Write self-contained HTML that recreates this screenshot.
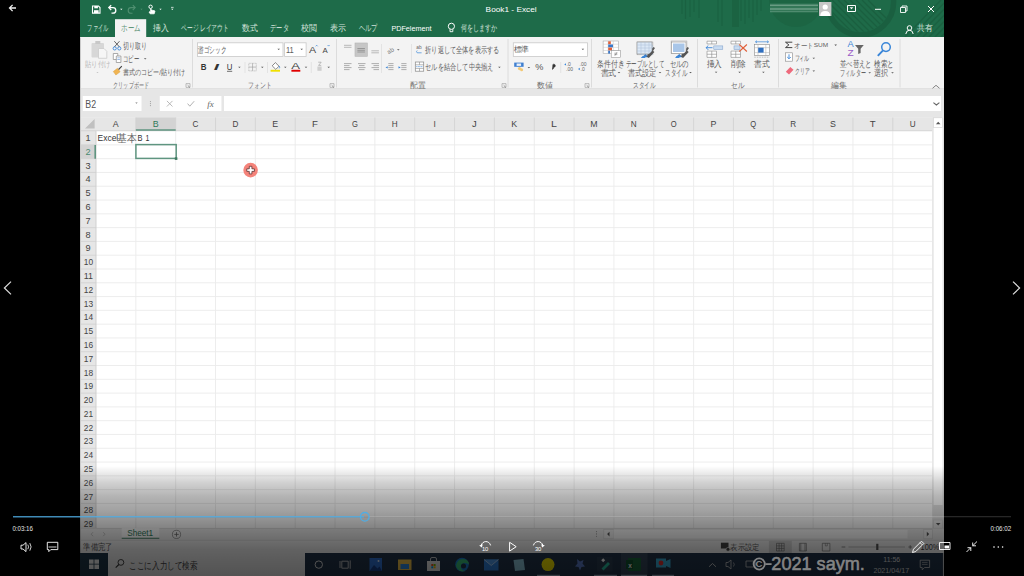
<!DOCTYPE html>
<html><head><meta charset="utf-8"><style>
html,body{margin:0;padding:0;background:#000;width:1024px;height:576px;overflow:hidden}
svg{display:block;font-family:"Liberation Sans",sans-serif}
</style></head><body>
<svg width="1024" height="576" viewBox="0 0 1024 576">
<rect x="0" y="0" width="1024" height="576" fill="#000"/>
<rect x="80" y="0" width="864" height="576" fill="#f3f3f3" />
<rect x="80" y="0" width="864" height="37" fill="#1e6b49" />
<g fill="none" stroke="#1a6141">
<line x1="682" y1="0" x2="682" y2="14" stroke="#1a6141" stroke-width="1.1" />
<line x1="685.5" y1="0" x2="685.5" y2="19" stroke="#1a6141" stroke-width="1.1" />
<line x1="690" y1="0" x2="690" y2="17" stroke="#1a6141" stroke-width="1.1" />
<line x1="694" y1="0" x2="694" y2="12" stroke="#1a6141" stroke-width="1.1" />
<line x1="699" y1="0" x2="699" y2="18" stroke="#1a6141" stroke-width="1.1" />
<line x1="718" y1="0" x2="718" y2="22" stroke="#1a6141" stroke-width="1.1" />
<line x1="722" y1="0" x2="722" y2="26" stroke="#1a6141" stroke-width="1.1" />
<line x1="741" y1="0" x2="741" y2="21" stroke="#1a6141" stroke-width="1.1" />
<line x1="745" y1="0" x2="745" y2="24" stroke="#1a6141" stroke-width="1.1" />
<line x1="749" y1="0" x2="749" y2="18" stroke="#1a6141" stroke-width="1.1" />
<line x1="753" y1="0" x2="753" y2="22" stroke="#1a6141" stroke-width="1.1" />
<line x1="757" y1="0" x2="757" y2="15" stroke="#1a6141" stroke-width="1.1" />
<line x1="761" y1="0" x2="761" y2="11" stroke="#1a6141" stroke-width="1.1" />
</g>
<rect x="732" y="0" width="7" height="27" fill="#1b6342" />
<circle cx="796" cy="0" r="27" fill="#1b6242" stroke="none" stroke-width="1" opacity="0.7"/>
<clipPath id="tb"><rect x="80" y="0" width="864" height="37"/></clipPath>
<g clip-path="url(#tb)">
<circle cx="860.6" cy="2" r="33" fill="none" stroke="#1a5d3e" stroke-width="5.5" opacity="0.85"/>
<clipPath id="ring"><circle cx="860.6" cy="2" r="30"/></clipPath>
<g clip-path="url(#ring)" stroke="#1a5d3e" stroke-width="1.3" opacity="0.8">
<line x1="820" y1="0" x2="860" y2="40"/>
<line x1="826" y1="0" x2="866" y2="40"/>
<line x1="832" y1="0" x2="872" y2="40"/>
<line x1="838" y1="0" x2="878" y2="40"/>
<line x1="844" y1="0" x2="884" y2="40"/>
<line x1="850" y1="0" x2="890" y2="40"/>
<line x1="856" y1="0" x2="896" y2="40"/>
<line x1="862" y1="0" x2="902" y2="40"/>
<line x1="868" y1="0" x2="908" y2="40"/>
</g>
<g stroke="#1a5d3e" stroke-width="1.3" opacity="0.7">
<line x1="905" y1="37" x2="941" y2="0"/>
<line x1="911" y1="37" x2="947" y2="0"/>
<line x1="917" y1="37" x2="953" y2="0"/>
<line x1="923" y1="37" x2="959" y2="0"/>
<line x1="929" y1="37" x2="965" y2="0"/>
<line x1="935" y1="37" x2="971" y2="0"/>
<line x1="941" y1="37" x2="977" y2="0"/>
</g>
</g>
<rect x="115" y="19.2" width="31.2" height="18.3" fill="#f3f3f3" />
<path d="M92.5 6 h6 l1.5 1.5 v5.6 h-7.5 z" fill="none" stroke="#fff" stroke-width="1.1" />
<rect x="94.3" y="6" width="3.6" height="2.3" fill="#fff" />
<rect x="94" y="10.2" width="4.6" height="2.9" fill="#fff" />
<path d="M109 7.6 h4 a2.8 2.8 0 0 1 0 5.6 h-1.5" fill="none" stroke="#fff" stroke-width="1.3" />
<path d="M111.2 5.2 l-2.4 2.4 l2.4 2.4" fill="none" stroke="#fff" stroke-width="1.3" />
<path d="M135 7.6 h-4 a2.8 2.8 0 0 0 0 5.6 h1.5" fill="none" stroke="#4f8f70" stroke-width="1.1" />
<path d="M132.8 5.2 l2.4 2.4 l-2.4 2.4" fill="none" stroke="#4f8f70" stroke-width="1.1" />
<path d="M120.10 8.70 h2.4 l-1.20 1.20 z" fill="#fff" stroke="none" stroke-width="1" />
<path d="M140.30 8.70 h2.4 l-1.20 1.20 z" fill="#4f8f70" stroke="none" stroke-width="1" />
<path d="M159.30 8.70 h2.4 l-1.20 1.20 z" fill="#fff" stroke="none" stroke-width="1" />
<path d="M171.10 8.70 h2.4 l-1.20 1.20 z" fill="#fff" stroke="none" stroke-width="1" />
<circle cx="150.6" cy="6.8" r="1.7" fill="none" stroke="#fff" stroke-width="1" />
<path d="M150.6 8.6 v2.8 l-1.6 0.6 l1.2 1.8 h4 l0.8 -2.8 l-2.6 -0.8" fill="#fff" stroke="#fff" stroke-width="0.8" />
<rect x="171" y="6.9" width="2.6" height="0.7" fill="#fff" />
<text x="485.63" y="11.9" font-size="7.36" fill="#fff" textLength="50.99" lengthAdjust="spacingAndGlyphs" >Book1 - Excel</text>
<rect x="770" y="3.5" width="48" height="9" fill="#4f8f70" opacity="0.45"/>
<rect x="770" y="4.6" width="48" height="1.4" fill="#cfe2d7" opacity="0.35"/>
<rect x="770" y="8.2" width="48" height="1.6" fill="#cfe2d7" opacity="0.35"/>
<rect x="770" y="11.2" width="48" height="0.9" fill="#a9cdb9" opacity="0.3"/>
<rect x="819" y="2" width="12.4" height="14" fill="#c6c6c6" />
<circle cx="825.2" cy="7" r="2.6" fill="#fff" stroke="none" stroke-width="1" />
<path d="M820.2 16 q0 -5 5 -5 q5 0 5 5 z" fill="#fff" stroke="none" stroke-width="1" />
<path d="M847.5 5.5 h8 v6 h-8 z" fill="none" stroke="#fff" stroke-width="1" />
<path d="M849.6 7.3 h3.8 l-1.9 2 z" fill="#fff" stroke="none" stroke-width="1" />
<line x1="875" y1="9.3" x2="881" y2="9.3" stroke="#fff" stroke-width="1" />
<path d="M900.5 7.5 h5 v5 h-5 z M902 7.5 v-1.5 h5 v5 h-1.5" fill="none" stroke="#fff" stroke-width="0.9" />
<path d="M928 6 l6 6 M934 6 l-6 6" fill="none" stroke="#fff" stroke-width="1" />
<text x="87.3" y="31.3" font-size="8.55" fill="#d2e2da" textLength="20.97" lengthAdjust="spacingAndGlyphs" >ファイル</text>
<text x="121.14" y="31.3" font-size="8.55" fill="#5d9478" textLength="19.3" lengthAdjust="spacingAndGlyphs" >ホーム</text>
<text x="152.75" y="31.3" font-size="8.55" fill="#d2e2da" textLength="15.7" lengthAdjust="spacingAndGlyphs" >挿入</text>
<text x="181.25" y="31.3" font-size="8.55" fill="#d2e2da" textLength="47.39" lengthAdjust="spacingAndGlyphs" >ページ レイアウト</text>
<text x="241.75" y="31.3" font-size="8.55" fill="#d2e2da" textLength="15.81" lengthAdjust="spacingAndGlyphs" >数式</text>
<text x="270.17" y="31.3" font-size="8.55" fill="#d2e2da" textLength="18.75" lengthAdjust="spacingAndGlyphs" >データ</text>
<text x="301.24" y="31.3" font-size="8.55" fill="#d2e2da" textLength="15.93" lengthAdjust="spacingAndGlyphs" >校閲</text>
<text x="330.13" y="31.3" font-size="8.55" fill="#d2e2da" textLength="16.05" lengthAdjust="spacingAndGlyphs" >表示</text>
<text x="358.77" y="31.3" font-size="8.55" fill="#d2e2da" textLength="18.75" lengthAdjust="spacingAndGlyphs" >ヘルプ</text>
<text x="391.4" y="31.3" font-size="8.06" fill="#fff" textLength="40.04" lengthAdjust="spacingAndGlyphs" >PDFelement</text>
<circle cx="451.4" cy="26.3" r="3.1" fill="none" stroke="#fff" stroke-width="1" />
<path d="M450 29.3 v2.4 h2.8 v-2.4" fill="none" stroke="#fff" stroke-width="0.9" />
<text x="461.2" y="31.3" font-size="8.55" fill="#d2e2da" textLength="35.98" lengthAdjust="spacingAndGlyphs" >何をしますか</text>
<circle cx="909.5" cy="28" r="2.3" fill="none" stroke="#fff" stroke-width="1" />
<path d="M905.8 34 q0.5 -3.8 3.7 -3.8 q3.2 0 3.7 3.8" fill="none" stroke="#fff" stroke-width="1" />
<text x="916.95" y="31.3" font-size="8.55" fill="#d2e2da" textLength="15.7" lengthAdjust="spacingAndGlyphs" >共有</text>
<rect x="80" y="37.5" width="864" height="50.8" fill="#f3f3f3" />
<rect x="80" y="88.3" width="864" height="1.2" fill="#d9d9d9" />
<line x1="192.5" y1="39" x2="192.5" y2="87.5" stroke="#dcdcdc" stroke-width="1" />
<line x1="336.5" y1="39" x2="336.5" y2="87.5" stroke="#dcdcdc" stroke-width="1" />
<line x1="508" y1="39" x2="508" y2="87.5" stroke="#dcdcdc" stroke-width="1" />
<line x1="591.5" y1="39" x2="591.5" y2="87.5" stroke="#dcdcdc" stroke-width="1" />
<line x1="697.5" y1="39" x2="697.5" y2="87.5" stroke="#dcdcdc" stroke-width="1" />
<line x1="778.5" y1="39" x2="778.5" y2="87.5" stroke="#dcdcdc" stroke-width="1" />
<line x1="900" y1="39" x2="900" y2="87.5" stroke="#dcdcdc" stroke-width="1" />
<text x="113.33" y="88.0" font-size="8.12" fill="#6a6a6a" textLength="35.42" lengthAdjust="spacingAndGlyphs" >クリップボード</text>
<text x="248.21" y="88.0" font-size="8.12" fill="#6a6a6a" textLength="23.66" lengthAdjust="spacingAndGlyphs" >フォント</text>
<text x="409.95" y="88.0" font-size="8.12" fill="#6a6a6a" textLength="15.7" lengthAdjust="spacingAndGlyphs" >配置</text>
<text x="537.45" y="88.0" font-size="8.12" fill="#6a6a6a" textLength="15.7" lengthAdjust="spacingAndGlyphs" >数値</text>
<text x="633.25" y="88.0" font-size="8.12" fill="#6a6a6a" textLength="22.47" lengthAdjust="spacingAndGlyphs" >スタイル</text>
<text x="731.42" y="88.0" font-size="8.12" fill="#6a6a6a" textLength="13.14" lengthAdjust="spacingAndGlyphs" >セル</text>
<text x="830.95" y="88.0" font-size="8.12" fill="#6a6a6a" textLength="15.7" lengthAdjust="spacingAndGlyphs" >編集</text>
<path d="M186 83.6 h4 v3.8 h-4 z" fill="none" stroke="#999" stroke-width="0.6" />
<path d="M187.7 85.3 l2.1 2.1" fill="none" stroke="#555" stroke-width="0.6" />
<path d="M330 83.6 h4 v3.8 h-4 z" fill="none" stroke="#999" stroke-width="0.6" />
<path d="M331.7 85.3 l2.1 2.1" fill="none" stroke="#555" stroke-width="0.6" />
<path d="M502 83.6 h4 v3.8 h-4 z" fill="none" stroke="#999" stroke-width="0.6" />
<path d="M503.7 85.3 l2.1 2.1" fill="none" stroke="#555" stroke-width="0.6" />
<path d="M585 83.6 h4 v3.8 h-4 z" fill="none" stroke="#999" stroke-width="0.6" />
<path d="M586.7 85.3 l2.1 2.1" fill="none" stroke="#555" stroke-width="0.6" />
<path d="M932.5 88.3 l3.5 -3 l3.5 3" fill="none" stroke="#777" stroke-width="0.9" />
<rect x="91.5" y="43" width="12.5" height="14.5" fill="#d7d7d7" rx="1"/>
<rect x="95.3" y="41" width="5" height="3" fill="#c8c8c8" />
<path d="M98.5 48.5 h5.5 l2.8 2.8 v7 h-8.3 z" fill="#f6f6f6" stroke="#cbcbcb" stroke-width="0.8" />
<text x="85.16" y="67.3" font-size="8.41" fill="#b9b9b9" textLength="25.27" lengthAdjust="spacingAndGlyphs" >貼り付け</text>
<path d="M96.40 72.00 h2.2 l-1.10 1.10 z" fill="#bbb" stroke="none" stroke-width="1" />
<path d="M114.3 41.2 l5.2 5.8 M119.5 41.2 l-5.2 5.8" fill="none" stroke="#555" stroke-width="0.9" />
<circle cx="114.7" cy="48.4" r="1.6" fill="none" stroke="#3a86d8" stroke-width="0.9" />
<circle cx="119.3" cy="48.4" r="1.6" fill="none" stroke="#3a86d8" stroke-width="0.9" />
<text x="122.9" y="48.5" font-size="8.99" fill="#5e5e5e" textLength="23.87" lengthAdjust="spacingAndGlyphs" >切り取り</text>
<path d="M113.3 53.5 h4.5 v6 h-4.5 z" fill="#fff" stroke="#888" stroke-width="0.7" />
<path d="M116.3 56 h4.6 v6.5 h-4.6 z" fill="#fff" stroke="#888" stroke-width="0.7" />
<rect x="117.3" y="57.6" width="2.6" height="0.6" fill="#5a8ed0" />
<rect x="117.3" y="59.1" width="2.6" height="0.6" fill="#5a8ed0" />
<text x="122.98" y="61.7" font-size="8.7" fill="#5e5e5e" textLength="16.1" lengthAdjust="spacingAndGlyphs" >コピー</text>
<path d="M143.90 58.20 h2.6 l-1.30 1.30 z" fill="#555" stroke="none" stroke-width="1" />
<path d="M113.3 71.5 l4.2 -3.2 l2.6 3.5 l-4.2 3.2 z" fill="#f0b452" stroke="#dba040" stroke-width="0.5" />
<path d="M118.6 69.5 l3.2 -3.4" fill="none" stroke="#444" stroke-width="1.1" />
<text x="122.9" y="74.7" font-size="7.97" fill="#5e5e5e" textLength="62.18" lengthAdjust="spacingAndGlyphs" >書式のコピー/貼り付け</text>
<rect x="197.5" y="42.8" width="85.5" height="13.6" fill="#fff" stroke="#c8c8c8" stroke-width="0.8"/>
<rect x="284.6" y="42.8" width="21.5" height="13.6" fill="#fff" stroke="#c8c8c8" stroke-width="0.8"/>
<text x="198.05" y="53" font-size="8.99" fill="#5e5e5e" textLength="28.18" lengthAdjust="spacingAndGlyphs" >游ゴシック</text>
<text x="285.97" y="53" font-size="8.61" fill="#5e5e5e" textLength="7.79" lengthAdjust="spacingAndGlyphs" >11</text>
<path d="M277.40 48.70 h2.6 l-1.30 1.30 z" fill="#555" stroke="none" stroke-width="1" />
<path d="M300.40 48.70 h2.6 l-1.30 1.30 z" fill="#555" stroke="none" stroke-width="1" />
<text x="309.13" y="53" font-size="9.44" fill="#444" textLength="7.16" lengthAdjust="spacingAndGlyphs" >A</text>
<path d="M315.7 46.3 l1 -1.1 l1 1.1" fill="none" stroke="#3a86d8" stroke-width="0.7" />
<text x="322.57" y="53" font-size="6.67" fill="#444" textLength="5.23" lengthAdjust="spacingAndGlyphs" >A</text>
<path d="M327.6 45 l1 1.1 l1 -1.1" fill="none" stroke="#3a86d8" stroke-width="0.7" />
<text x="200.73" y="70" font-size="9.31" fill="#333" textLength="5.74" lengthAdjust="spacingAndGlyphs" font-weight="bold" >B</text>
<text x="213.83" y="70" font-size="9.31" fill="#333" textLength="5.24" lengthAdjust="spacingAndGlyphs" font-weight="bold" font-style="italic">I</text>
<text x="226.63" y="70" font-size="9.31" fill="#333" textLength="5.64" lengthAdjust="spacingAndGlyphs" >U</text>
<line x1="227" y1="71.3" x2="232.2" y2="71.3" stroke="#333" stroke-width="0.7" />
<path d="M238.10 66.70 h2.6 l-1.30 1.30 z" fill="#555" stroke="none" stroke-width="1" />
<path d="M261.00 66.70 h2.6 l-1.30 1.30 z" fill="#555" stroke="none" stroke-width="1" />
<path d="M284.00 66.70 h2.6 l-1.30 1.30 z" fill="#555" stroke="none" stroke-width="1" />
<path d="M304.70 66.70 h2.6 l-1.30 1.30 z" fill="#555" stroke="none" stroke-width="1" />
<path d="M327.40 66.70 h2.6 l-1.30 1.30 z" fill="#555" stroke="none" stroke-width="1" />
<line x1="245" y1="62" x2="245" y2="73" stroke="#dedede" stroke-width="0.8" />
<line x1="267.5" y1="62" x2="267.5" y2="73" stroke="#dedede" stroke-width="0.8" />
<line x1="311.3" y1="62" x2="311.3" y2="73" stroke="#dedede" stroke-width="0.8" />
<path d="M248.8 63.3 h7.5 v7.6 h-7.5 z" fill="none" stroke="#aaa" stroke-width="0.6" stroke-dasharray="1 0.5"/>
<path d="M252.55 63.3 v7.6 M248.8 67.1 h7.5" fill="none" stroke="#999" stroke-width="0.6" />
<path d="M272.2 65.8 l3.2 -3.2 l3.6 3.6 l-3.2 3.2 z" fill="#fff" stroke="#555" stroke-width="0.7" />
<path d="M279.2 66 q1 1.5 0 2.4" fill="none" stroke="#3a86d8" stroke-width="0.8" />
<rect x="270.6" y="69.8" width="9.4" height="1.9" fill="#f0e000" />
<text x="291.36" y="68.5" font-size="8.75" fill="#444" textLength="8.7" lengthAdjust="spacingAndGlyphs" >A</text>
<rect x="291.4" y="69.8" width="8.9" height="1.9" fill="#e00000" />
<path d="M318.2 62.2 h3 l-2.6 3.2 h2.6" fill="none" stroke="#999" stroke-width="0.6" />
<rect x="317.4" y="66.5" width="4.2" height="4.3" fill="#cfcfcf" />
<path d="M344 45.3 h7.5 M344 47.3 h7.5" fill="none" stroke="#a8a8a8" stroke-width="0.8" />
<rect x="355" y="43" width="12.3" height="13.3" fill="#c6c6c6" stroke="#b4b4b4" stroke-width="0.6"/>
<path d="M357.4 48.5 h7.5 M357.4 50.3 h7.5 M357.4 52 h7.5" fill="none" stroke="#8a8a8a" stroke-width="0.8" />
<path d="M371.4 50.8 h7.5 M371.4 52.8 h7.5" fill="none" stroke="#a8a8a8" stroke-width="0.8" />
<line x1="381.5" y1="44" x2="381.5" y2="73" stroke="#dedede" stroke-width="0.8" />
<text x="386.5" y="53" font-size="6.2" fill="#777" transform="rotate(-35 390 50)">ab</text>
<path d="M397.00 49.30 h2.6 l-1.30 1.30 z" fill="#555" stroke="none" stroke-width="1" />
<line x1="411.5" y1="44" x2="411.5" y2="73" stroke="#dedede" stroke-width="0.8" />
<text x="416.3" y="49.2" font-size="4.8" fill="#666" >ab</text>
<path d="M417.2 50.5 q-1.4 1.1 0 2.3 h4.4" fill="none" stroke="#3a86d8" stroke-width="0.7" />
<text x="425.28" y="53.2" font-size="8.55" fill="#5e5e5e" textLength="74.03" lengthAdjust="spacingAndGlyphs" >折り返して全体を表示する</text>
<line x1="344" y1="63.6" x2="351.5" y2="63.6" stroke="#9a9a9a" stroke-width="0.8" />
<line x1="344" y1="65.6" x2="349.5" y2="65.6" stroke="#9a9a9a" stroke-width="0.8" />
<line x1="344" y1="67.6" x2="351.5" y2="67.6" stroke="#9a9a9a" stroke-width="0.8" />
<line x1="344" y1="69.6" x2="349.5" y2="69.6" stroke="#9a9a9a" stroke-width="0.8" />
<line x1="358.0" y1="63.6" x2="365.5" y2="63.6" stroke="#9a9a9a" stroke-width="0.8" />
<line x1="359.0" y1="65.6" x2="364.5" y2="65.6" stroke="#9a9a9a" stroke-width="0.8" />
<line x1="358.0" y1="67.6" x2="365.5" y2="67.6" stroke="#9a9a9a" stroke-width="0.8" />
<line x1="359.0" y1="69.6" x2="364.5" y2="69.6" stroke="#9a9a9a" stroke-width="0.8" />
<line x1="371.5" y1="63.6" x2="379.0" y2="63.6" stroke="#9a9a9a" stroke-width="0.8" />
<line x1="373.5" y1="65.6" x2="379.0" y2="65.6" stroke="#9a9a9a" stroke-width="0.8" />
<line x1="371.5" y1="67.6" x2="379.0" y2="67.6" stroke="#9a9a9a" stroke-width="0.8" />
<line x1="373.5" y1="69.6" x2="379.0" y2="69.6" stroke="#9a9a9a" stroke-width="0.8" />
<line x1="388.3" y1="63.6" x2="393.5" y2="63.6" stroke="#9a9a9a" stroke-width="0.8" />
<line x1="388.3" y1="65.6" x2="393.5" y2="65.6" stroke="#9a9a9a" stroke-width="0.8" />
<line x1="388.3" y1="67.6" x2="393.5" y2="67.6" stroke="#9a9a9a" stroke-width="0.8" />
<line x1="388.3" y1="69.6" x2="393.5" y2="69.6" stroke="#9a9a9a" stroke-width="0.8" />
<path d="M387.7 66.3 l-2.2 1.1 l2.2 1.1 z" fill="#3a86d8" stroke="none" stroke-width="1" />
<line x1="401.3" y1="63.6" x2="406.5" y2="63.6" stroke="#9a9a9a" stroke-width="0.8" />
<line x1="401.3" y1="65.6" x2="406.5" y2="65.6" stroke="#9a9a9a" stroke-width="0.8" />
<line x1="401.3" y1="67.6" x2="406.5" y2="67.6" stroke="#9a9a9a" stroke-width="0.8" />
<line x1="401.3" y1="69.6" x2="406.5" y2="69.6" stroke="#9a9a9a" stroke-width="0.8" />
<path d="M398.5 66.3 l2.2 1.1 l-2.2 1.1 z" fill="#3a86d8" stroke="none" stroke-width="1" />
<rect x="415.3" y="62" width="8.4" height="9.2" fill="#fff" stroke="#888" stroke-width="0.7"/>
<path d="M415.3 64.8 h8.4 M415.3 68.4 h8.4 M419.5 62 v2.8 M419.5 68.4 v2.8" fill="none" stroke="#888" stroke-width="0.6" />
<path d="M416.3 66.6 h6.4" fill="none" stroke="#3a86d8" stroke-width="0.7" stroke-dasharray="1 0.5"/>
<text x="425.27" y="69.8" font-size="8.55" fill="#5e5e5e" textLength="68.13" lengthAdjust="spacingAndGlyphs" >セルを結合して中央揃え</text>
<path d="M498.10 66.70 h2.6 l-1.30 1.30 z" fill="#555" stroke="none" stroke-width="1" />
<rect x="513.3" y="42.8" width="74.2" height="13.6" fill="#fff" stroke="#c8c8c8" stroke-width="0.8"/>
<text x="513.56" y="52.1" font-size="7.97" fill="#5e5e5e" textLength="15.58" lengthAdjust="spacingAndGlyphs" >標準</text>
<path d="M581.60 48.70 h2.6 l-1.30 1.30 z" fill="#555" stroke="none" stroke-width="1" />
<rect x="514.2" y="62.6" width="9.4" height="4.2" fill="#3f7fd0" />
<rect x="516.6" y="63.5" width="4.5" height="2.4" fill="#e8f0fa" />
<circle cx="519.5" cy="68.6" r="1.6" fill="#f2c874" stroke="none" stroke-width="1" />
<circle cx="521.6" cy="69.8" r="1.5" fill="#f2c874" stroke="none" stroke-width="1" />
<path d="M527.60 66.90 h2.6 l-1.30 1.30 z" fill="#555" stroke="none" stroke-width="1" />
<text x="535.24" y="70.3" font-size="9.17" fill="#555" textLength="8.13" lengthAdjust="spacingAndGlyphs" >%</text>
<path d="M552.6 64.8 a1.5 1.5 0 1 1 1.3 2.4 q0 1.5 -1.8 2.3" fill="#333" stroke="#333" stroke-width="0.6" />
<line x1="560.7" y1="62" x2="560.7" y2="73" stroke="#dedede" stroke-width="0.8" />
<text x="566.5" y="66.3" font-size="5" fill="#666" >.0</text>
<text x="566" y="71" font-size="5" fill="#666" >.00</text>
<path d="M564.2 64.4 l1.8 -1.2 v2.4 z" fill="#3a86d8" stroke="none" stroke-width="1" />
<text x="579.5" y="66.3" font-size="5" fill="#666" >.00</text>
<text x="580.5" y="71" font-size="5" fill="#666" >.0</text>
<path d="M578 69 l1.8 -1.2 v2.4 z" fill="#3a86d8" stroke="none" stroke-width="1" />
<rect x="603.1" y="41" width="15.4" height="12.7" fill="#fff" stroke="#9a9a9a" stroke-width="0.5"/>
<path d="M603.1 44.2 h15.4 M603.1 47.35 h15.4 M603.1 50.5 h15.4 M608.2 41 v12.7 M613.3 41 v12.7" fill="none" stroke="#c4c4c4" stroke-width="0.5" />
<rect x="608.2" y="41.3" width="2.6" height="2.9" fill="#e0603a" />
<rect x="608.2" y="44.5" width="4.8" height="2.8" fill="#3a78c8" />
<rect x="608.2" y="47.6" width="3.8" height="2.8" fill="#e0603a" />
<rect x="608.2" y="50.7" width="1.8" height="2.9" fill="#3a78c8" />
<rect x="611.2" y="50.7" width="9.2" height="6.6" fill="#fff" stroke="#888" stroke-width="0.5"/>
<path d="M614.3 53.2 h3 M614.3 54.6 h3 M617 52.2 l-2.2 3.6" fill="none" stroke="#666" stroke-width="0.5" />
<rect x="637.1" y="42" width="15.8" height="12.8" fill="#fff" stroke="#9a9a9a" stroke-width="0.5"/>
<rect x="641" y="45.2" width="11.9" height="9.6" fill="#c3d7ed" />
<path d="M637.1 45.2 h15.8 M637.1 48.4 h15.8 M637.1 51.6 h15.8 M641 42 v12.8 M645 42 v12.8 M649 42 v12.8" fill="none" stroke="#a9bdd6" stroke-width="0.5" />
<path d="M647 55.2 l6.4 -8.2 l1.6 1.1 l-5.9 8.5 z" fill="#5a5a5a" stroke="none" stroke-width="1" />
<path d="M642 57.2 l3.5 -3.2 l3.2 3.2 z" fill="#3a7cc8" stroke="none" stroke-width="1" />
<rect x="671.1" y="41" width="15.8" height="12.7" fill="#fff" stroke="#9a9a9a" stroke-width="0.5"/>
<rect x="673.6" y="43.4" width="10.9" height="7.7" fill="#b9d1eb" />
<path d="M681 55.2 l6.4 -8.2 l1.6 1.1 l-5.9 8.5 z" fill="#5a5a5a" stroke="none" stroke-width="1" />
<path d="M675.5 57.2 l3.8 -3.2 l3.5 3.2 z" fill="#3a7cc8" stroke="none" stroke-width="1" />
<text x="597.08" y="67.3" font-size="9.13" fill="#5e5e5e" textLength="27.53" lengthAdjust="spacingAndGlyphs" >条件付き</text>
<text x="600.54" y="75.8" font-size="8.84" fill="#5e5e5e" textLength="15.93" lengthAdjust="spacingAndGlyphs" >書式</text>
<path d="M617.70 72.00 h2.6 l-1.30 1.30 z" fill="#555" stroke="none" stroke-width="1" />
<rect x="637" y="42" width="15" height="12" fill="#dce8f6" stroke="#8a8a8a" stroke-width="0.6"/>
<path d="M637 45 h15 M637 48 h15 M637 51 h15 M641 42 v12 M645 42 v12 M649 42 v12" fill="none" stroke="#a8bcd4" stroke-width="0.5" />
<path d="M646.5 56.5 l6 -6 l1.9 1.4 l-5.6 6" fill="#555" stroke="none" stroke-width="1" />
<path d="M640.8 58 q2 -3 5.6 -2 l-1.6 2 z" fill="#3a86d8" stroke="none" stroke-width="1" />
<text x="625.77" y="67.3" font-size="9.13" fill="#5e5e5e" textLength="38.54" lengthAdjust="spacingAndGlyphs" >テーブルとして</text>
<text x="627.54" y="75.8" font-size="8.84" fill="#5e5e5e" textLength="28.92" lengthAdjust="spacingAndGlyphs" >書式設定</text>
<path d="M658.70 72.00 h2.6 l-1.30 1.30 z" fill="#555" stroke="none" stroke-width="1" />
<rect x="671.5" y="42" width="14.5" height="11.5" fill="#fff" stroke="#8a8a8a" stroke-width="0.6"/>
<rect x="673" y="43.5" width="11.5" height="8.5" fill="#a9c6e8" />
<path d="M680.8 56.5 l6 -6 l1.9 1.4 l-5.6 6" fill="#555" stroke="none" stroke-width="1" />
<path d="M675 58 q2 -3 5.6 -2 l-1.6 2 z" fill="#3a86d8" stroke="none" stroke-width="1" />
<text x="669.75" y="67.3" font-size="9.13" fill="#5e5e5e" textLength="19.08" lengthAdjust="spacingAndGlyphs" >セルの</text>
<text x="665.27" y="75.8" font-size="8.84" fill="#5e5e5e" textLength="21.94" lengthAdjust="spacingAndGlyphs" >スタイル</text>
<path d="M689.20 72.00 h2.6 l-1.30 1.30 z" fill="#555" stroke="none" stroke-width="1" />
<path d="M707 41.2 h9.5 v2.7 h-9.5 z M711.75 41.2 v2.7 M707 51.1 h9.5 v6.3 h-9.5 z M707 54.25 h9.5 M711.75 51.1 v6.3" fill="#fff" stroke="#888" stroke-width="0.6" />
<rect x="713.8" y="45.9" width="9" height="3.6" fill="#c9dcf1" stroke="#7a9cc8" stroke-width="0.5"/>
<path d="M706 47.7 h6.5 M708.3 45.5 l-2.2 2.2 l2.2 2.2" fill="none" stroke="#3a86d8" stroke-width="0.9" />
<text x="706.88" y="66.9" font-size="8.55" fill="#5e5e5e" textLength="15.23" lengthAdjust="spacingAndGlyphs" >挿入</text>
<path d="M714.80 71.70 h2.6 l-1.30 1.30 z" fill="#555" stroke="none" stroke-width="1" />
<path d="M731 41.2 h9.5 v2.7 h-9.5 z M735.75 41.2 v2.7 M731 51.1 h9.5 v6.3 h-9.5 z M731 54.25 h9.5 M735.75 51.1 v6.3" fill="#fff" stroke="#888" stroke-width="0.6" />
<rect x="734" y="45.9" width="6" height="3.6" fill="#c9dcf1" stroke="#7a9cc8" stroke-width="0.5"/>
<path d="M739.3 44.5 l7.6 7 M746.9 44.5 l-7.6 7" fill="none" stroke="#e0603a" stroke-width="1.1" />
<text x="730.88" y="66.9" font-size="8.55" fill="#5e5e5e" textLength="15.23" lengthAdjust="spacingAndGlyphs" >削除</text>
<path d="M738.30 71.70 h2.6 l-1.30 1.30 z" fill="#555" stroke="none" stroke-width="1" />
<rect x="754.3" y="44.3" width="15.2" height="11" fill="#fff" stroke="#888" stroke-width="0.6"/>
<path d="M754.3 47.7 h15.2 M754.3 52.6 h15.2 M758 44.3 v11 M765.8 44.3 v11" fill="none" stroke="#aaa" stroke-width="0.5" />
<rect x="758.2" y="47.7" width="5.4" height="4.9" fill="#2f6fc0" />
<path d="M755.5 41.8 h13 M757 40.6 l-1.5 1.2 l1.5 1.2 M767 40.6 l1.5 1.2 l-1.5 1.2" fill="none" stroke="#3a86d8" stroke-width="0.7" />
<path d="M754.3 57.2 h15.2" fill="none" stroke="#999" stroke-width="0.6" stroke-dasharray="1.5 1"/>
<text x="754.35" y="66.9" font-size="8.55" fill="#5e5e5e" textLength="15.7" lengthAdjust="spacingAndGlyphs" >書式</text>
<path d="M762.10 71.70 h2.6 l-1.30 1.30 z" fill="#555" stroke="none" stroke-width="1" />
<path d="M792.3 42.2 h-6.8 l3.4 2.7 l-3.4 2.7 h6.8" fill="none" stroke="#444" stroke-width="1" />
<text x="794.34" y="48" font-size="6.81" fill="#5e5e5e" textLength="19.41" lengthAdjust="spacingAndGlyphs" >オート</text>
<text x="813.72" y="47.4" font-size="5.69" fill="#5e5e5e" textLength="14.46" lengthAdjust="spacingAndGlyphs" >SUM</text>
<path d="M834.40 44.60 h2.6 l-1.30 1.30 z" fill="#555" stroke="none" stroke-width="1" />
<rect x="785.6" y="52.8" width="6.8" height="8.4" fill="#fff" stroke="#888" stroke-width="0.6"/>
<path d="M789 54.3 v4.3 M787.2 57 l1.8 1.8 l1.8 -1.8" fill="none" stroke="#3a86d8" stroke-width="0.9" />
<text x="794.54" y="60.9" font-size="8.12" fill="#5e5e5e" textLength="14.89" lengthAdjust="spacingAndGlyphs" >フィル</text>
<path d="M812.50 57.70 h2.6 l-1.30 1.30 z" fill="#555" stroke="none" stroke-width="1" />
<path d="M785.8 71.8 l4.5 -4.8 l3.2 2.8 l-4.5 4.8 z" fill="#ee6a7c" stroke="none" stroke-width="1" />
<text x="794.85" y="73.7" font-size="8.41" fill="#5e5e5e" textLength="14.56" lengthAdjust="spacingAndGlyphs" >クリア</text>
<path d="M812.50 70.40 h2.6 l-1.30 1.30 z" fill="#555" stroke="none" stroke-width="1" />
<text x="847.58" y="47" font-size="8.33" fill="#3a86d8" textLength="6.17" lengthAdjust="spacingAndGlyphs" >A</text>
<text x="847.58" y="55.5" font-size="8.33" fill="#9a5cc8" textLength="6.17" lengthAdjust="spacingAndGlyphs" >Z</text>
<path d="M855 44.9 h8.8 l-3.2 3.8 v4.3 l-2.4 1 v-5.3 z" fill="#666" stroke="none" stroke-width="1" />
<text x="840.16" y="67.3" font-size="8.55" fill="#5e5e5e" textLength="31.67" lengthAdjust="spacingAndGlyphs" >並べ替えと</text>
<text x="840.32" y="76.1" font-size="9.42" fill="#5e5e5e" textLength="25.42" lengthAdjust="spacingAndGlyphs" >フィルター</text>
<path d="M868.40 72.20 h2.6 l-1.30 1.30 z" fill="#555" stroke="none" stroke-width="1" />
<circle cx="886" cy="47.1" r="4.3" fill="none" stroke="#3a86d8" stroke-width="1.5" />
<path d="M883 50.3 l-5.2 5.6" fill="none" stroke="#3a86d8" stroke-width="1.9" />
<text x="874.12" y="67.3" font-size="8.55" fill="#5e5e5e" textLength="19.85" lengthAdjust="spacingAndGlyphs" >検索と</text>
<text x="874.05" y="76.1" font-size="9.42" fill="#5e5e5e" textLength="14.3" lengthAdjust="spacingAndGlyphs" >選択</text>
<path d="M891.20 72.20 h2.6 l-1.30 1.30 z" fill="#555" stroke="none" stroke-width="1" />
<rect x="80" y="89.5" width="864" height="28" fill="#e6e6e6" />
<rect x="82.8" y="96" width="58.7" height="15" fill="#fff" />
<text x="85.3" y="108" font-size="10.0" fill="#555" textLength="10.8" lengthAdjust="spacingAndGlyphs" >B2</text>
<path d="M135.30 102.60 h2.4 l-1.20 1.20 z" fill="#777" stroke="none" stroke-width="1" />
<circle cx="150.4" cy="101.6" r="0.55" fill="#999" stroke="none" stroke-width="1" />
<circle cx="150.4" cy="103.6" r="0.55" fill="#999" stroke="none" stroke-width="1" />
<circle cx="150.4" cy="105.6" r="0.55" fill="#999" stroke="none" stroke-width="1" />
<rect x="159.75" y="96" width="61.7" height="15" fill="#fff" />
<path d="M166.9 100.9 l5.6 5.6 M172.5 100.9 l-5.6 5.6" fill="none" stroke="#a8a8a8" stroke-width="0.8" />
<path d="M187.6 103.6 l2.2 2.6 l4.4 -5" fill="none" stroke="#a8a8a8" stroke-width="0.9" />
<text x="207.3" y="107.3" font-size="9" fill="#666" font-style="italic" font-family="Liberation Serif">fx</text>
<rect x="224" y="96" width="717" height="15" fill="#fff" />
<path d="M933.4 102.6 l3 2.4 l3 -2.4" fill="none" stroke="#666" stroke-width="1.1" />
<rect x="80" y="117.5" width="852.3" height="13.25" fill="#e6e6e6" />
<rect x="80" y="130.75" width="16.0" height="397.35" fill="#e6e6e6" />
<rect x="96.0" y="130.75" width="836.3" height="397.35" fill="#ffffff" />
<rect x="135.84" y="117.5" width="39.84" height="13.25" fill="#d3d3d3" />
<rect x="81" y="144.89" width="15.0" height="13.79" fill="#d3d3d3" />
<g stroke="#ebebeb" stroke-width="0.9">
<line x1="135.84" y1="131.1" x2="135.84" y2="528.1"/>
<line x1="175.68" y1="131.1" x2="175.68" y2="528.1"/>
<line x1="215.52" y1="131.1" x2="215.52" y2="528.1"/>
<line x1="255.36" y1="131.1" x2="255.36" y2="528.1"/>
<line x1="295.20" y1="131.1" x2="295.20" y2="528.1"/>
<line x1="335.04" y1="131.1" x2="335.04" y2="528.1"/>
<line x1="374.88" y1="131.1" x2="374.88" y2="528.1"/>
<line x1="414.72" y1="131.1" x2="414.72" y2="528.1"/>
<line x1="454.56" y1="131.1" x2="454.56" y2="528.1"/>
<line x1="494.40" y1="131.1" x2="494.40" y2="528.1"/>
<line x1="534.24" y1="131.1" x2="534.24" y2="528.1"/>
<line x1="574.08" y1="131.1" x2="574.08" y2="528.1"/>
<line x1="613.92" y1="131.1" x2="613.92" y2="528.1"/>
<line x1="653.76" y1="131.1" x2="653.76" y2="528.1"/>
<line x1="693.60" y1="131.1" x2="693.60" y2="528.1"/>
<line x1="733.44" y1="131.1" x2="733.44" y2="528.1"/>
<line x1="773.28" y1="131.1" x2="773.28" y2="528.1"/>
<line x1="813.12" y1="131.1" x2="813.12" y2="528.1"/>
<line x1="852.96" y1="131.1" x2="852.96" y2="528.1"/>
<line x1="892.80" y1="131.1" x2="892.80" y2="528.1"/>
<line x1="96.0" y1="144.89" x2="932.3" y2="144.89"/>
<line x1="96.0" y1="158.68" x2="932.3" y2="158.68"/>
<line x1="96.0" y1="172.47" x2="932.3" y2="172.47"/>
<line x1="96.0" y1="186.26" x2="932.3" y2="186.26"/>
<line x1="96.0" y1="200.05" x2="932.3" y2="200.05"/>
<line x1="96.0" y1="213.84" x2="932.3" y2="213.84"/>
<line x1="96.0" y1="227.63" x2="932.3" y2="227.63"/>
<line x1="96.0" y1="241.42" x2="932.3" y2="241.42"/>
<line x1="96.0" y1="255.21" x2="932.3" y2="255.21"/>
<line x1="96.0" y1="269.00" x2="932.3" y2="269.00"/>
<line x1="96.0" y1="282.79" x2="932.3" y2="282.79"/>
<line x1="96.0" y1="296.58" x2="932.3" y2="296.58"/>
<line x1="96.0" y1="310.37" x2="932.3" y2="310.37"/>
<line x1="96.0" y1="324.16" x2="932.3" y2="324.16"/>
<line x1="96.0" y1="337.95" x2="932.3" y2="337.95"/>
<line x1="96.0" y1="351.74" x2="932.3" y2="351.74"/>
<line x1="96.0" y1="365.53" x2="932.3" y2="365.53"/>
<line x1="96.0" y1="379.32" x2="932.3" y2="379.32"/>
<line x1="96.0" y1="393.11" x2="932.3" y2="393.11"/>
<line x1="96.0" y1="406.90" x2="932.3" y2="406.90"/>
<line x1="96.0" y1="420.69" x2="932.3" y2="420.69"/>
<line x1="96.0" y1="434.48" x2="932.3" y2="434.48"/>
<line x1="96.0" y1="448.27" x2="932.3" y2="448.27"/>
<line x1="96.0" y1="462.06" x2="932.3" y2="462.06"/>
<line x1="96.0" y1="475.85" x2="932.3" y2="475.85"/>
<line x1="96.0" y1="489.64" x2="932.3" y2="489.64"/>
<line x1="96.0" y1="503.43" x2="932.3" y2="503.43"/>
<line x1="96.0" y1="517.22" x2="932.3" y2="517.22"/>
</g>
<g stroke="#d2d2d2" stroke-width="0.9">
<line x1="135.84" y1="117.5" x2="135.84" y2="130.75"/>
<line x1="175.68" y1="117.5" x2="175.68" y2="130.75"/>
<line x1="215.52" y1="117.5" x2="215.52" y2="130.75"/>
<line x1="255.36" y1="117.5" x2="255.36" y2="130.75"/>
<line x1="295.20" y1="117.5" x2="295.20" y2="130.75"/>
<line x1="335.04" y1="117.5" x2="335.04" y2="130.75"/>
<line x1="374.88" y1="117.5" x2="374.88" y2="130.75"/>
<line x1="414.72" y1="117.5" x2="414.72" y2="130.75"/>
<line x1="454.56" y1="117.5" x2="454.56" y2="130.75"/>
<line x1="494.40" y1="117.5" x2="494.40" y2="130.75"/>
<line x1="534.24" y1="117.5" x2="534.24" y2="130.75"/>
<line x1="574.08" y1="117.5" x2="574.08" y2="130.75"/>
<line x1="613.92" y1="117.5" x2="613.92" y2="130.75"/>
<line x1="653.76" y1="117.5" x2="653.76" y2="130.75"/>
<line x1="693.60" y1="117.5" x2="693.60" y2="130.75"/>
<line x1="733.44" y1="117.5" x2="733.44" y2="130.75"/>
<line x1="773.28" y1="117.5" x2="773.28" y2="130.75"/>
<line x1="813.12" y1="117.5" x2="813.12" y2="130.75"/>
<line x1="852.96" y1="117.5" x2="852.96" y2="130.75"/>
<line x1="892.80" y1="117.5" x2="892.80" y2="130.75"/>
<line x1="80" y1="144.89" x2="96.0" y2="144.89"/>
<line x1="80" y1="158.68" x2="96.0" y2="158.68"/>
<line x1="80" y1="172.47" x2="96.0" y2="172.47"/>
<line x1="80" y1="186.26" x2="96.0" y2="186.26"/>
<line x1="80" y1="200.05" x2="96.0" y2="200.05"/>
<line x1="80" y1="213.84" x2="96.0" y2="213.84"/>
<line x1="80" y1="227.63" x2="96.0" y2="227.63"/>
<line x1="80" y1="241.42" x2="96.0" y2="241.42"/>
<line x1="80" y1="255.21" x2="96.0" y2="255.21"/>
<line x1="80" y1="269.00" x2="96.0" y2="269.00"/>
<line x1="80" y1="282.79" x2="96.0" y2="282.79"/>
<line x1="80" y1="296.58" x2="96.0" y2="296.58"/>
<line x1="80" y1="310.37" x2="96.0" y2="310.37"/>
<line x1="80" y1="324.16" x2="96.0" y2="324.16"/>
<line x1="80" y1="337.95" x2="96.0" y2="337.95"/>
<line x1="80" y1="351.74" x2="96.0" y2="351.74"/>
<line x1="80" y1="365.53" x2="96.0" y2="365.53"/>
<line x1="80" y1="379.32" x2="96.0" y2="379.32"/>
<line x1="80" y1="393.11" x2="96.0" y2="393.11"/>
<line x1="80" y1="406.90" x2="96.0" y2="406.90"/>
<line x1="80" y1="420.69" x2="96.0" y2="420.69"/>
<line x1="80" y1="434.48" x2="96.0" y2="434.48"/>
<line x1="80" y1="448.27" x2="96.0" y2="448.27"/>
<line x1="80" y1="462.06" x2="96.0" y2="462.06"/>
<line x1="80" y1="475.85" x2="96.0" y2="475.85"/>
<line x1="80" y1="489.64" x2="96.0" y2="489.64"/>
<line x1="80" y1="503.43" x2="96.0" y2="503.43"/>
<line x1="80" y1="517.22" x2="96.0" y2="517.22"/>
</g>
<line x1="80" y1="130.75" x2="932.3" y2="130.75" stroke="#cdcdcd" stroke-width="0.8" />
<line x1="96.0" y1="131.1" x2="96.0" y2="528.1" stroke="#cdcdcd" stroke-width="0.9" />
<line x1="135.84" y1="130.05" x2="175.68" y2="130.05" stroke="#5f9580" stroke-width="1.4" />
<line x1="95.2" y1="144.89" x2="95.2" y2="158.68" stroke="#5f9580" stroke-width="1.6" />
<path d="M85 128.6 h9.6 v-9.6 z" fill="#c0c0c0" stroke="none" stroke-width="1" />
<text x="112.88" y="126.9" font-size="8.75" fill="#444" textLength="5.9" lengthAdjust="spacingAndGlyphs" >A</text>
<text x="152.72" y="126.9" font-size="8.75" fill="#2f7a5a" textLength="5.9" lengthAdjust="spacingAndGlyphs" >B</text>
<text x="192.56" y="126.9" font-size="8.75" fill="#444" textLength="5.9" lengthAdjust="spacingAndGlyphs" >C</text>
<text x="232.4" y="126.9" font-size="8.75" fill="#444" textLength="5.9" lengthAdjust="spacingAndGlyphs" >D</text>
<text x="272.24" y="126.9" font-size="8.75" fill="#444" textLength="5.9" lengthAdjust="spacingAndGlyphs" >E</text>
<text x="312.08" y="126.9" font-size="8.75" fill="#444" textLength="5.9" lengthAdjust="spacingAndGlyphs" >F</text>
<text x="351.92" y="126.9" font-size="8.75" fill="#444" textLength="5.9" lengthAdjust="spacingAndGlyphs" >G</text>
<text x="391.76" y="126.9" font-size="8.75" fill="#444" textLength="5.9" lengthAdjust="spacingAndGlyphs" >H</text>
<text x="433.4" y="126.9" font-size="8.75" fill="#444" textLength="2.3" lengthAdjust="spacingAndGlyphs" >I</text>
<text x="472.04" y="126.9" font-size="8.75" fill="#444" textLength="4.7" lengthAdjust="spacingAndGlyphs" >J</text>
<text x="511.28" y="126.9" font-size="8.75" fill="#444" textLength="5.9" lengthAdjust="spacingAndGlyphs" >K</text>
<text x="551.12" y="126.9" font-size="8.75" fill="#444" textLength="5.9" lengthAdjust="spacingAndGlyphs" >L</text>
<text x="590.26" y="126.9" font-size="8.75" fill="#444" textLength="7.3" lengthAdjust="spacingAndGlyphs" >M</text>
<text x="630.8" y="126.9" font-size="8.75" fill="#444" textLength="5.9" lengthAdjust="spacingAndGlyphs" >N</text>
<text x="670.64" y="126.9" font-size="8.75" fill="#444" textLength="5.9" lengthAdjust="spacingAndGlyphs" >O</text>
<text x="710.48" y="126.9" font-size="8.75" fill="#444" textLength="5.9" lengthAdjust="spacingAndGlyphs" >P</text>
<text x="750.32" y="126.9" font-size="8.75" fill="#444" textLength="5.9" lengthAdjust="spacingAndGlyphs" >Q</text>
<text x="790.16" y="126.9" font-size="8.75" fill="#444" textLength="5.9" lengthAdjust="spacingAndGlyphs" >R</text>
<text x="830.0" y="126.9" font-size="8.75" fill="#444" textLength="5.9" lengthAdjust="spacingAndGlyphs" >S</text>
<text x="869.84" y="126.9" font-size="8.75" fill="#444" textLength="5.9" lengthAdjust="spacingAndGlyphs" >T</text>
<text x="909.68" y="126.9" font-size="8.75" fill="#444" textLength="5.9" lengthAdjust="spacingAndGlyphs" >U</text>
<text x="85.56" y="141.1" font-size="8.75" fill="#444" textLength="5.1" lengthAdjust="spacingAndGlyphs" >1</text>
<text x="85.56" y="154.89" font-size="8.75" fill="#4a8a72" textLength="5.1" lengthAdjust="spacingAndGlyphs" >2</text>
<text x="85.56" y="168.68" font-size="8.75" fill="#444" textLength="5.1" lengthAdjust="spacingAndGlyphs" >3</text>
<text x="85.56" y="182.47" font-size="8.75" fill="#444" textLength="5.1" lengthAdjust="spacingAndGlyphs" >4</text>
<text x="85.56" y="196.26" font-size="8.75" fill="#444" textLength="5.1" lengthAdjust="spacingAndGlyphs" >5</text>
<text x="85.56" y="210.05" font-size="8.75" fill="#444" textLength="5.1" lengthAdjust="spacingAndGlyphs" >6</text>
<text x="85.56" y="223.84" font-size="8.75" fill="#444" textLength="5.1" lengthAdjust="spacingAndGlyphs" >7</text>
<text x="85.56" y="237.63" font-size="8.75" fill="#444" textLength="5.1" lengthAdjust="spacingAndGlyphs" >8</text>
<text x="85.56" y="251.42" font-size="8.75" fill="#444" textLength="5.1" lengthAdjust="spacingAndGlyphs" >9</text>
<text x="83.76" y="265.21" font-size="8.75" fill="#444" textLength="9.3" lengthAdjust="spacingAndGlyphs" >10</text>
<text x="83.76" y="279.0" font-size="8.75" fill="#444" textLength="9.3" lengthAdjust="spacingAndGlyphs" >11</text>
<text x="83.76" y="292.79" font-size="8.75" fill="#444" textLength="9.3" lengthAdjust="spacingAndGlyphs" >12</text>
<text x="83.76" y="306.58" font-size="8.75" fill="#444" textLength="9.3" lengthAdjust="spacingAndGlyphs" >13</text>
<text x="83.76" y="320.37" font-size="8.75" fill="#444" textLength="9.3" lengthAdjust="spacingAndGlyphs" >14</text>
<text x="83.76" y="334.16" font-size="8.75" fill="#444" textLength="9.3" lengthAdjust="spacingAndGlyphs" >15</text>
<text x="83.76" y="347.95" font-size="8.75" fill="#444" textLength="9.3" lengthAdjust="spacingAndGlyphs" >16</text>
<text x="83.76" y="361.74" font-size="8.75" fill="#444" textLength="9.3" lengthAdjust="spacingAndGlyphs" >17</text>
<text x="83.76" y="375.53" font-size="8.75" fill="#444" textLength="9.3" lengthAdjust="spacingAndGlyphs" >18</text>
<text x="83.76" y="389.32" font-size="8.75" fill="#444" textLength="9.3" lengthAdjust="spacingAndGlyphs" >19</text>
<text x="83.76" y="403.11" font-size="8.75" fill="#444" textLength="9.3" lengthAdjust="spacingAndGlyphs" >20</text>
<text x="83.76" y="416.9" font-size="8.75" fill="#444" textLength="9.3" lengthAdjust="spacingAndGlyphs" >21</text>
<text x="83.76" y="430.69" font-size="8.75" fill="#444" textLength="9.3" lengthAdjust="spacingAndGlyphs" >22</text>
<text x="83.76" y="444.48" font-size="8.75" fill="#444" textLength="9.3" lengthAdjust="spacingAndGlyphs" >23</text>
<text x="83.76" y="458.27" font-size="8.75" fill="#444" textLength="9.3" lengthAdjust="spacingAndGlyphs" >24</text>
<text x="83.76" y="472.06" font-size="8.75" fill="#444" textLength="9.3" lengthAdjust="spacingAndGlyphs" >25</text>
<text x="83.76" y="485.85" font-size="8.75" fill="#444" textLength="9.3" lengthAdjust="spacingAndGlyphs" >26</text>
<text x="83.76" y="499.64" font-size="8.75" fill="#444" textLength="9.3" lengthAdjust="spacingAndGlyphs" >27</text>
<text x="83.76" y="513.43" font-size="8.75" fill="#444" textLength="9.3" lengthAdjust="spacingAndGlyphs" >28</text>
<text x="83.76" y="527.22" font-size="8.75" fill="#444" textLength="9.3" lengthAdjust="spacingAndGlyphs" >29</text>
<text x="97.56" y="140.9" font-size="8.75" fill="#333" textLength="20.7" lengthAdjust="spacingAndGlyphs" >Excel</text>
<text x="117.0" y="141.5" font-size="10.87" fill="#666" textLength="19.53" lengthAdjust="spacingAndGlyphs" >基本</text>
<text x="137.46" y="140.9" font-size="8.75" fill="#333" textLength="5.0" lengthAdjust="spacingAndGlyphs" >B</text>
<text x="145.56" y="140.9" font-size="8.75" fill="#333" textLength="3.9" lengthAdjust="spacingAndGlyphs" >1</text>
<rect x="135.9" y="144.6" width="40.3" height="13.8" fill="none" stroke="#5f9580" stroke-width="1.5"/>
<rect x="174.8" y="157.3" width="2.6" height="2.6" fill="#3f7a60" />
<circle cx="250.6" cy="170.1" r="7.3" fill="#f4837a" stroke="none" stroke-width="1" />
<path d="M249.3 166.3 h2.6 v2.5 h2.5 v2.6 h-2.5 v2.5 h-2.6 v-2.5 h-2.5 v-2.6 h2.5 z" fill="#fff" stroke="#4a2020" stroke-width="0.7" />
<rect x="932.3" y="117.5" width="11.7" height="410.6" fill="#e2e2e2" />
<rect x="933.6" y="127.5" width="8.9" height="377.5" fill="#ffffff" />
<rect x="933.6" y="117.8" width="8.9" height="9.6" fill="#ffffff" stroke="#d4d4d4" stroke-width="0.6"/>
<path d="M935.9 124.2 l2.3 -2.4 l2.3 2.4 z" fill="#555" stroke="none" stroke-width="1" />
<rect x="933.6" y="520" width="8.9" height="8.6" fill="#ececec" stroke="#d4d4d4" stroke-width="0.6"/>
<path d="M935.9 523 l2.3 2.4 l2.3 -2.4 z" fill="#555" stroke="none" stroke-width="1" />
<rect x="80" y="528.1" width="864" height="12.4" fill="#efefef" />
<line x1="80" y1="528.4" x2="944" y2="528.4" stroke="#d4d4d4" stroke-width="0.6" />
<path d="M93 532.2 l-1.8 2 l1.8 2" fill="none" stroke="#b8b8b8" stroke-width="0.8" />
<path d="M103.2 532.2 l1.8 2 l-1.8 2" fill="none" stroke="#b8b8b8" stroke-width="0.8" />
<rect x="121.7" y="528.1" width="37.6" height="10.6" fill="#ffffff" />
<line x1="121.7" y1="538.3" x2="159.3" y2="538.3" stroke="#3f7a60" stroke-width="1.1" />
<text x="127.16" y="536.2" font-size="8.89" fill="#2f7a5a" textLength="26.01" lengthAdjust="spacingAndGlyphs" >Sheet1</text>
<circle cx="176.5" cy="534.4" r="4.1" fill="none" stroke="#7a7a7a" stroke-width="0.7" />
<path d="M174.3 534.4 h4.4 M176.5 532.2 v4.4" fill="none" stroke="#666" stroke-width="0.8" />
<circle cx="596.5" cy="531.6" r="0.55" fill="#999" stroke="none" stroke-width="1" />
<circle cx="596.5" cy="533.9" r="0.55" fill="#999" stroke="none" stroke-width="1" />
<circle cx="596.5" cy="536.2" r="0.55" fill="#999" stroke="none" stroke-width="1" />
<rect x="603.8" y="529.4" width="9.5" height="9.4" fill="#f6f6f6" stroke="#d4d4d4" stroke-width="0.6"/>
<path d="M609.5 531.8 l-2.4 2.3 l2.4 2.3 z" fill="#555" stroke="none" stroke-width="1" />
<rect x="613.5" y="529.8" width="294" height="8.6" fill="#ffffff" />
<rect x="923.8" y="529.4" width="8.5" height="9.4" fill="#f6f6f6" stroke="#d4d4d4" stroke-width="0.6"/>
<path d="M926.8 531.8 l2.4 2.3 l-2.4 2.3 z" fill="#555" stroke="none" stroke-width="1" />
<rect x="80" y="540.3" width="864" height="12.7" fill="#f3f3f3" />
<line x1="80" y1="540.3" x2="944" y2="540.3" stroke="#d8d8d8" stroke-width="0.7" />
<text x="83.43" y="549.6" font-size="8.55" fill="#555" textLength="29.14" lengthAdjust="spacingAndGlyphs" >準備完了</text>
<rect x="720.9" y="542.7" width="7.6" height="5.8" fill="#444" />
<circle cx="728" cy="549.3" r="1.9" fill="#444" stroke="#f3f3f3" stroke-width="0.6" />
<text x="730.43" y="549.7" font-size="8.41" fill="#555" textLength="29.03" lengthAdjust="spacingAndGlyphs" >表示設定</text>
<rect x="768.9" y="540.7" width="22.9" height="12.3" fill="#d6d6d6" />
<path d="M776.5 543.3 h7.7 v7.7 h-7.7 z M776.5 545.9 h7.7 M776.5 548.4 h7.7 M779.1 543.3 v7.7 M781.6 543.3 v7.7" fill="none" stroke="#666" stroke-width="0.6" />
<path d="M799.4 543.3 h7 v7.7 h-7 z M800.8 543.3 v7.7 M805 543.3 v7.7" fill="none" stroke="#666" stroke-width="0.6" />
<path d="M822.3 543.3 h7.6 v7.7 h-7.6 z" fill="none" stroke="#666" stroke-width="0.6" />
<path d="M825.3 543.3 v2.6 h2 v-2.6" fill="none" stroke="#666" stroke-width="0.5" />
<line x1="841.6" y1="547" x2="845.3" y2="547" stroke="#666" stroke-width="0.7" />
<line x1="848.5" y1="547" x2="905" y2="547" stroke="#9a9a9a" stroke-width="0.6" />
<rect x="876.2" y="543.8" width="2.2" height="6.2" fill="#555" />
<path d="M908.4 547 h3.6 M910.2 545.2 v3.6" fill="none" stroke="#666" stroke-width="0.7" />
<text x="920.59" y="549.7" font-size="8.19" fill="#444" textLength="18.66" lengthAdjust="spacingAndGlyphs" >100%</text>
<rect x="80" y="553" width="863" height="23" fill="#22344a" />
<rect x="80" y="553" width="28" height="23" fill="#1e3648" />
<path d="M89 559.4 h4.6 v4.4 h-4.6 z M94.4 559.4 h4.6 v4.4 h-4.6 z M89 564.6 h4.6 v4.4 h-4.6 z M94.4 564.6 h4.6 v4.4 h-4.6 z" fill="#f0f0f0" stroke="none" stroke-width="1" />
<rect x="108" y="553" width="197" height="23" fill="#f2f2f2" />
<circle cx="120.9" cy="562.4" r="2.9" fill="none" stroke="#333" stroke-width="0.9" />
<path d="M118.9 564.5 l-3.2 3.2" fill="none" stroke="#333" stroke-width="1.1" />
<text x="129.19" y="568.5" font-size="10.14" fill="#444" textLength="68.22" lengthAdjust="spacingAndGlyphs" >ここに入力して検索</text>
<circle cx="318.8" cy="564.6" r="3.7" fill="none" stroke="#ddd" stroke-width="1" />
<path d="M341.8 561.2 h6.4 v7 h-6.4 z M350.2 560.4 v8.4 M340 561 v7" fill="none" stroke="#ccc" stroke-width="0.9" />
<rect x="369.5" y="558" width="12.5" height="13" fill="#2f72d4" />
<path d="M369.5 571 l4.5 -6 l3.5 3.5 l2 -2 l2.5 4.5 z" fill="#17408a" stroke="none" stroke-width="1" />
<circle cx="378.5" cy="561" r="1" fill="#dde8f8" stroke="none" stroke-width="1" />
<rect x="398" y="559.5" width="13.5" height="10.5" fill="#f2c44a" />
<rect x="400.5" y="564" width="8.5" height="5" fill="#2f8ae0" />
<path d="M427 561 h13 v10 h-13 z" fill="#e8e8e8" stroke="none" stroke-width="1" />
<path d="M430.5 561 v-2 q0 -1.5 1.5 -1.5 h3 q1.5 0 1.5 1.5 v2" fill="none" stroke="#e8e8e8" stroke-width="0.8" />
<rect x="431.3" y="564" width="2" height="2" fill="#f25022" />
<rect x="433.6" y="564" width="2" height="2" fill="#7fba00" />
<rect x="431.3" y="566.3" width="2" height="2" fill="#00a4ef" />
<rect x="433.6" y="566.3" width="2" height="2" fill="#ffb900" />
<circle cx="462" cy="564.6" r="6.8" fill="#1a7fd0" stroke="none" stroke-width="1" />
<path d="M456 566 q1 -7 7 -7 q6 0.5 6 5.5 q-2 -2 -5 -1.5 q-4 1 -3 5 q1 3 5 3 q-8 2 -10 -5 z" fill="#39c07a" stroke="none" stroke-width="1" />
<circle cx="463.5" cy="566" r="2.5" fill="#22344a" stroke="none" stroke-width="1" />
<rect x="484" y="559.5" width="14.5" height="11" fill="#2f80da" />
<path d="M484 559.5 l7.25 6 l7.25 -6" fill="#4f9ae8" stroke="#cfe3f8" stroke-width="0.7" />
<path d="M513.5 560 l10 -1 l1.5 11 l-10 1 z" fill="#8cc4d8" stroke="none" stroke-width="1" />
<circle cx="548" cy="564.6" r="6.5" fill="#f4e400" stroke="none" stroke-width="1" />
<path d="M577 559 l3 2.5 l3.5 -1.5 l-1 3.5 l2.5 3 l-3.5 0.5 l-1.5 3.5 l-1.5 -3.5 l-3.5 -0.5 l2.5 -3 z" fill="#5b7cc8" stroke="none" stroke-width="1" />
<rect x="597" y="557" width="15.5" height="14.5" fill="#2a3c50" />
<path d="M601.5 568.5 l6.5 -6.5 l2 2 l-6.5 6.5 z" fill="#2ac0a0" stroke="none" stroke-width="1" />
<rect x="601.8" y="558.8" width="2.8" height="2.8" fill="#fff" transform="rotate(45 603.2 560.2)"/>
<rect x="621" y="553" width="26.5" height="23" fill="#34465a" />
<rect x="628" y="558" width="13" height="13" fill="#1a6a3c" />
<rect x="626" y="560" width="7" height="9" fill="#0f5430" />
<text x="628.3" y="567.5" font-size="6.5" fill="#fff" font-weight="bold" >x</text>
<rect x="656" y="558.5" width="10" height="9" fill="#3aaed8" />
<path d="M666 561 l4.5 -2 v9 l-4.5 -2 z" fill="#3aaed8" stroke="none" stroke-width="1" />
<circle cx="661" cy="563" r="2.4" fill="#e03030" stroke="none" stroke-width="1" />
<rect x="537" y="574.8" width="23" height="1.2" fill="#a0b4c8" />
<rect x="594" y="574.8" width="23" height="1.2" fill="#a0b4c8" />
<rect x="621" y="574.8" width="26" height="1.2" fill="#a0b4c8" />
<rect x="652" y="574.8" width="22" height="1.2" fill="#a0b4c8" />
<path d="M709 566.8 l3.5 -3.3 l3.5 3.3" fill="none" stroke="#ccc" stroke-width="0.9" />
<path d="M726 562.5 h2 l3 -2.5 v9 l-3 -2.5 h-2 z" fill="none" stroke="#ccc" stroke-width="0.8" />
<path d="M733.5 562.5 q1.5 2 0 4" fill="none" stroke="#ccc" stroke-width="0.7" />
<path d="M746 561 h9 v6 h-9 z M755 563 h1 v2 h-1" fill="none" stroke="#ccc" stroke-width="0.8" />
<text x="883.34" y="562" font-size="7.22" fill="#ddd" textLength="16.88" lengthAdjust="spacingAndGlyphs" >11:56</text>
<text x="873.41" y="572.6" font-size="7.78" fill="#ddd" textLength="35.82" lengthAdjust="spacingAndGlyphs" >2021/04/17</text>
<path d="M920.2 560.2 h9.4 v7.3 h-5 l-2.4 2.3 v-2.3 h-2 z" fill="none" stroke="#ccc" stroke-width="0.8" />
<path d="M922 562.4 h5.6 M922 564.4 h5.6" fill="none" stroke="#ccc" stroke-width="0.6" />
<line x1="942.8" y1="553" x2="942.8" y2="576" stroke="#3a4450" stroke-width="0.8" />
<line x1="80.5" y1="37.5" x2="80.5" y2="553" stroke="#cbcbcb" stroke-width="1" />
<defs><linearGradient id="ov" x1="0" y1="0" x2="0" y2="1">
<stop offset="0" stop-color="#000" stop-opacity="0"/>
<stop offset="0.15" stop-color="#000" stop-opacity="0.18"/>
<stop offset="0.28" stop-color="#000" stop-opacity="0.30"/>
<stop offset="0.41" stop-color="#000" stop-opacity="0.37"/>
<stop offset="0.54" stop-color="#000" stop-opacity="0.47"/>
<stop offset="0.76" stop-color="#000" stop-opacity="0.60"/>
<stop offset="1" stop-color="#000" stop-opacity="0.66"/>
</linearGradient></defs>
<rect x="0" y="466" width="1024" height="110" fill="url(#ov)"/>
<g opacity="0.92">
<circle cx="759.2" cy="564" r="5.6" fill="none" stroke="#8e8e8e" stroke-width="1.8" />
<text x="755.6" y="567.4" font-size="9.5" fill="#8e8e8e" font-weight="bold" >C</text>
<rect x="765.3" y="563.2" width="6.3" height="1.8" fill="#8e8e8e" />
<text x="771.37" y="570.4" font-size="18.61" fill="#8e8e8e" textLength="93.49" lengthAdjust="spacingAndGlyphs" stroke="#8e8e8e" stroke-width="0.6">2021 saym.</text>
</g>
<path d="M9.6 8 h6.4 M12.6 4.9 l-3.1 3.1 l3.1 3.1" fill="none" stroke="#eee" stroke-width="1.3" />
<path d="M11 281.6 l-6.6 6.4 l6.6 6.4" fill="none" stroke="#ddd" stroke-width="1.2" />
<path d="M1013 281.6 l6.6 6.4 l-6.6 6.4" fill="none" stroke="#ddd" stroke-width="1.2" />
<rect x="13" y="516.2" width="351" height="1.2" fill="#50ade4" />
<rect x="369" y="516.3" width="642" height="0.9" fill="#ffffff" opacity="0.22"/>
<circle cx="364.8" cy="516.8" r="4.3" fill="none" stroke="#50ade4" stroke-width="1.3" />
<text x="12.48" y="531" font-size="6.39" fill="#e6e6e6" textLength="20.41" lengthAdjust="spacingAndGlyphs" >0:03:16</text>
<text x="990.48" y="531" font-size="6.39" fill="#e6e6e6" textLength="20.71" lengthAdjust="spacingAndGlyphs" >0:06:02</text>
<path d="M21 545.2 h2 l3 -2.6 v9 l-3 -2.6 h-2 z" fill="none" stroke="#ffffff" stroke-width="0.9" />
<path d="M27.8 544.6 q1.5 2.3 0 4.6 M29.8 543.1 q2.6 3.8 0 7.6" fill="none" stroke="#ffffff" stroke-width="0.8" />
<path d="M47.3 542.3 h10.5 v7.3 h-7 l-2 2 v-2 h-1.5 z" fill="none" stroke="#ffffff" stroke-width="0.9" />
<line x1="48.5" y1="547" x2="56.5" y2="547" stroke="#ffffff" stroke-width="0.8" />
<path d="M481 545.6 C482.5 540.5 489 540 490.6 545.4" fill="none" stroke="#ffffff" stroke-width="1.0" />
<path d="M479.2 545.4 l3.6 -1.2 l-0.9 3.2 z" fill="#ffffff" stroke="none" stroke-width="1" />
<text x="481.9" y="551.4" font-size="5.8" fill="#ffffff" >10</text>
<path d="M509.6 542.3 l6.6 4.4 l-6.6 4.4 z" fill="none" stroke="#ffffff" stroke-width="1" stroke-linejoin="round"/>
<path d="M533.4 545.4 C535 540 541.5 540.5 543 545.6" fill="none" stroke="#ffffff" stroke-width="1.0" />
<path d="M544.8 545.4 l-3.6 -1.2 l0.9 3.2 z" fill="#ffffff" stroke="none" stroke-width="1" />
<text x="534.9" y="551.4" font-size="5.8" fill="#ffffff" >30</text>
<path d="M912.5 552.5 l1 -3.3 l8 -8 l2.3 2.3 l-8 8 z M920 542.6 l2.3 2.3" fill="none" stroke="#ffffff" stroke-width="0.9" />
<path d="M939.5 542.5 h10.5 v7 h-10.5 z" fill="none" stroke="#ffffff" stroke-width="0.9" />
<rect x="944.5" y="545.5" width="4.5" height="3" fill="#ffffff" />
<path d="M966.5 552 l4.3 -4.3 M967.5 547.7 h3.3 v3.3 M977 541.5 l-4.3 4.3 M972.7 542.5 v3.3 h3.3" fill="none" stroke="#ffffff" stroke-width="0.9" />
<circle cx="994" cy="547" r="0.8" fill="#ffffff" stroke="none" stroke-width="1" />
<circle cx="998.3" cy="547" r="0.8" fill="#ffffff" stroke="none" stroke-width="1" />
<circle cx="1002.6" cy="547" r="0.8" fill="#ffffff" stroke="none" stroke-width="1" />
</svg>
</body></html>
